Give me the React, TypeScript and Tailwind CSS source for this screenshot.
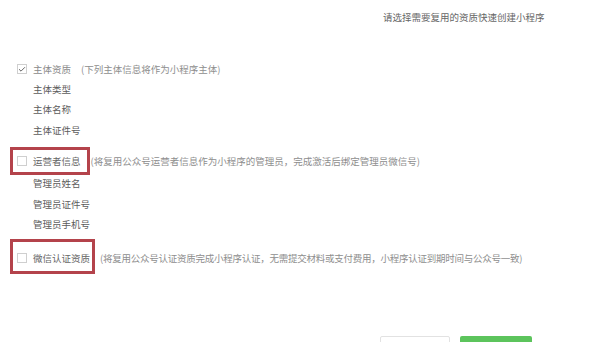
import { Check } from 'lucide-react';

const font = { fontFamily: '"Noto Sans CJK SC", "Noto Sans", sans-serif' };

function Box({ checked = false }: { checked?: boolean }) {
    return (
        <span className="flex h-[10px] w-[10px] items-center justify-center border border-[#cfcfcf] bg-white">
            {checked && <Check className="h-[9px] w-[9px] text-[#666]" strokeWidth={3} />}
        </span>
    );
}

function Section({
    label,
    desc,
    checked,
    marked,
    frame,
    tight,
}: {
    label: string;
    desc: string;
    checked?: boolean;
    marked?: boolean;
    frame?: string;
    tight?: boolean;
}) {
    return (
        <div className="flex items-center h-[14px] leading-[14px]">
            <div className="relative flex items-center">
                <Box checked={checked} />
                <span className={`ml-[6px] ${marked ? 'text-[#666]' : 'text-[#8a8a8a]'}`}>{label}</span>
                {frame && <span className={`pointer-events-none absolute border-[3px] border-[#b4434b] ${frame}`} />}
            </div>
            <span className={`ml-[10px] text-[#8e8e8e] ${tight ? 'tracking-[-0.25px]' : ''}`}>{desc}</span>
        </div>
    );
}

function SubItem({ children }: { children: string }) {
    return <div className="pl-[16px] h-[14px] leading-[14px] text-[#5c5c5c]">{children}</div>;
}

export default function App() {
    return (
        <div className="w-[600px] h-[342px] overflow-hidden bg-white text-[9.5px]" style={font}>
            {/* Header */}
            <div className="pt-[10px] pl-[383px] h-[24px] leading-[14px] text-[#666]">
                请选择需要复用的资质快速创建小程序
            </div>

            <div className="pl-[17px] flex flex-col">
                <div className="mt-[38px]">
                    <Section label="主体资质" desc="(下列主体信息将作为小程序主体)" checked />
                </div>
                <div className="mt-[6px]"><SubItem>主体类型</SubItem></div>
                <div className="mt-[6px]"><SubItem>主体名称</SubItem></div>
                <div className="mt-[7px]"><SubItem>主体证件号</SubItem></div>

                <div className="mt-[17px]">
                    <Section
                        label="运营者信息"
                        desc="(将复用公众号运营者信息作为小程序的管理员，完成激活后绑定管理员微信号)"
                        marked
                        frame="-left-[7px] -right-[9px] -top-[7px] -bottom-[7px]"
                    />
                </div>
                <div className="mt-[8px]"><SubItem>管理员姓名</SubItem></div>
                <div className="mt-[7px]"><SubItem>管理员证件号</SubItem></div>
                <div className="mt-[6px]"><SubItem>管理员手机号</SubItem></div>

                <div className="mt-[20px]">
                    <Section
                        label="微信认证资质"
                        desc="(将复用公众号认证资质完成小程序认证，无需提交材料或支付费用，小程序认证到期时间与公众号一致)"
                        marked
                        tight
                        frame="-left-[7px] -right-[5px] -top-[12px] -bottom-[9px]"
                    />
                </div>
            </div>

            {/* Footer buttons, only their top edges show */}
            <div className="mt-[71px] pl-[380px] flex gap-[10px]">
                <div className="w-[70px] h-[30px] border border-[#e2e2e2] bg-white rounded-[2px]" />
                <div className="w-[72px] h-[30px] bg-[#5cc45c] rounded-[2px]" />
            </div>
        </div>
    );
}
